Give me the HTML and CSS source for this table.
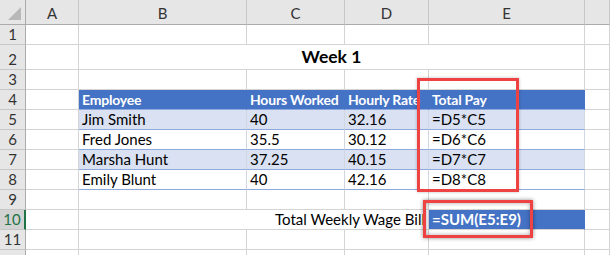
FILE: index.html
```html
<!DOCTYPE html>
<html lang="en">
<head>
<meta charset="utf-8">
<title>Week 1 wages</title>
<link rel="stylesheet" href="styles.css">
</head>
<body>
<div class="sheet">
  <!-- column headers -->
  <div class="ch corner"><span class="tri"></span></div>
  <div class="ch">A</div>
  <div class="ch">B</div>
  <div class="ch">C</div>
  <div class="ch">D</div>
  <div class="ch">E</div>
  <div class="ch"></div>

  <!-- row 1 -->
  <div class="rh">1</div>
  <div class="c"></div><div class="c"></div><div class="c"></div><div class="c"></div><div class="c"></div><div class="c"></div>

  <!-- row 2: title centred across B:E -->
  <div class="rh">2</div>
  <div class="c"></div>
  <div class="c title span4">Week 1</div>
  <div class="c"></div>

  <!-- row 3 -->
  <div class="rh">3</div>
  <div class="c"></div><div class="c"></div><div class="c"></div><div class="c"></div><div class="c"></div><div class="c"></div>

  <!-- row 4: table header -->
  <div class="rh">4</div>
  <div class="c"></div>
  <div class="c th">Employee</div>
  <div class="c th">Hours Worked</div>
  <div class="c th">Hourly Rate</div>
  <div class="c th">Total Pay</div>
  <div class="c"></div>

  <!-- row 5 -->
  <div class="rh">5</div>
  <div class="c"></div>
  <div class="c td band">Jim Smith</div>
  <div class="c td band">40</div>
  <div class="c td band">32.16</div>
  <div class="c td band">=D5*C5</div>
  <div class="c"></div>

  <!-- row 6 -->
  <div class="rh">6</div>
  <div class="c"></div>
  <div class="c td">Fred Jones</div>
  <div class="c td">35.5</div>
  <div class="c td">30.12</div>
  <div class="c td">=D6*C6</div>
  <div class="c"></div>

  <!-- row 7 -->
  <div class="rh">7</div>
  <div class="c"></div>
  <div class="c td band">Marsha Hunt</div>
  <div class="c td band">37.25</div>
  <div class="c td band">40.15</div>
  <div class="c td band">=D7*C7</div>
  <div class="c"></div>

  <!-- row 8 -->
  <div class="rh">8</div>
  <div class="c"></div>
  <div class="c td">Emily Blunt</div>
  <div class="c td">40</div>
  <div class="c td">42.16</div>
  <div class="c td">=D8*C8</div>
  <div class="c"></div>

  <!-- row 9 -->
  <div class="rh">9</div>
  <div class="c"></div><div class="c"></div><div class="c"></div><div class="c"></div><div class="c"></div><div class="c"></div>

  <!-- row 10: total -->
  <div class="rh sel">10</div>
  <div class="c"></div>
  <div class="c label span3"><span>Total Weekly Wage Bill</span></div>
  <div class="c total">=SUM(E5:E9)</div>
  <div class="c"></div>

  <!-- row 11 -->
  <div class="rh">11</div>
  <div class="c"></div><div class="c"></div><div class="c"></div><div class="c"></div><div class="c"></div><div class="c"></div>

  <!-- row 12 (only its top edge is in view) -->
  <div class="rh"></div>
  <div class="c"></div><div class="c"></div><div class="c"></div><div class="c"></div><div class="c"></div><div class="c"></div>

  <!-- highlight boxes -->
  <div class="mark mark-pay"></div>
  <div class="mark mark-sum"></div>
</div>
</body>
</html>
```
FILE: styles.css
```css
html, body {
  margin: 0;
  padding: 0;
  background: #ffffff;
  overflow: hidden;
}

.sheet {
  position: relative;
  display: grid;
  grid-template-columns: 26px 53px 168px 98px 84px 156px 25px;
  grid-template-rows: 25px 20px 25px repeat(9, 20px) 20px;
  width: 610px;
  height: 255px;
  overflow: hidden;
  font-family: Lato, "Open Sans", sans-serif;
  font-size: 15px;
  color: #000;
}

.sheet > div {
  box-sizing: border-box;
  white-space: nowrap;
  overflow: hidden;
}

/* headers */
.ch {
  background: #e6e6e6;
  border-right: 1px solid #c6c6c6;
  border-bottom: 1px solid #ababab;
  color: #333;
  display: flex;
  align-items: center;
  justify-content: center;
  padding-top: 2px;
}

.corner {
  position: relative;
  border-right-color: #ababab;
}

.tri {
  position: absolute;
  right: 4px;
  bottom: 4px;
  width: 0;
  height: 0;
  border-left: 13px solid transparent;
  border-bottom: 13px solid #b8b8b8;
}

.rh {
  background: #e6e6e6;
  border-right: 1px solid #ababab;
  border-bottom: 1px solid #c6c6c6;
  color: #333;
  display: flex;
  align-items: flex-end;
  justify-content: center;
  padding-bottom: 1px;
}

.rh.sel {
  background: #d2d2d2;
  color: #217346;
  border-right: 2px solid #217346;
}

/* plain cells */
.c {
  border-right: 1px solid #d4d4d4;
  border-bottom: 1px solid #d4d4d4;
  display: flex;
  align-items: flex-end;
  padding: 0 3px 1px 3px;
}

.span4 { grid-column: span 4; }
.span3 { grid-column: span 3; }

.title {
  justify-content: center;
  font-weight: 700;
  font-size: 17.5px;
  padding-bottom: 2px;
}

/* table */
.th {
  background: #4472c4;
  color: #fff;
  font-weight: 700;
  font-size: 14px;
  letter-spacing: -0.2px;
  border-right-color: #4472c4;
  border-bottom-color: #8ea9db;
}

.td {
  border-bottom-color: #8ea9db;
  border-right-color: #d0d6e2;
}

.td.band {
  background: #d9e1f2;
}

.label {
  justify-content: flex-end;
  padding-right: 3px;
}

.total {
  background: #4472c4;
  color: #fff;
  font-weight: 700;
  border-right-color: #4472c4;
  border-bottom-color: #d4d4d4;
}

/* red highlight boxes */
.mark {
  position: absolute;
  border: 3px solid #ef4242;
  box-sizing: border-box;
}

.mark-pay {
  left: 417px;
  top: 78px;
  width: 102px;
  height: 114px;
  box-shadow: 0 0 3px rgba(0, 0, 0, 0.25);
}

.mark-sum {
  left: 423px;
  top: 200px;
  width: 110px;
  height: 38px;
  box-shadow: 0 0 4px rgba(0, 0, 0, 0.45), inset 0 0 4px rgba(0, 0, 0, 0.35);
}
```
